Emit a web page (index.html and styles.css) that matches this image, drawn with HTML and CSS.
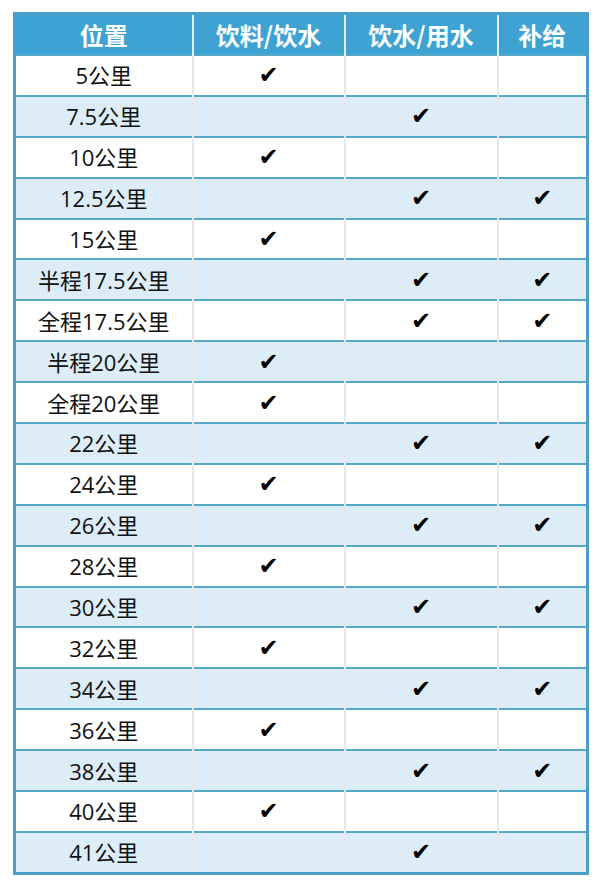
FILE: index.html
```html
<!DOCTYPE html>
<html lang="zh">
<head>
<meta charset="utf-8">
<link rel="stylesheet" href="styles.css">
</head>
<body>
<table class="grid">
  <colgroup>
    <col class="c1"><col class="c2"><col class="c3"><col class="c4">
  </colgroup>
  <thead>
    <tr><th>位置</th><th>饮料/饮水</th><th>饮水/用水</th><th>补给</th></tr>
  </thead>
  <tbody>
    <tr><td>5公里</td><td class="ck">✔</td><td></td><td></td></tr>
    <tr class="alt"><td>7.5公里</td><td></td><td class="ck">✔</td><td></td></tr>
    <tr><td>10公里</td><td class="ck">✔</td><td></td><td></td></tr>
    <tr class="alt"><td>12.5公里</td><td></td><td class="ck">✔</td><td class="ck">✔</td></tr>
    <tr><td>15公里</td><td class="ck">✔</td><td></td><td></td></tr>
    <tr class="alt"><td>半程17.5公里</td><td></td><td class="ck">✔</td><td class="ck">✔</td></tr>
    <tr><td>全程17.5公里</td><td></td><td class="ck">✔</td><td class="ck">✔</td></tr>
    <tr class="alt"><td>半程20公里</td><td class="ck">✔</td><td></td><td></td></tr>
    <tr><td>全程20公里</td><td class="ck">✔</td><td></td><td></td></tr>
    <tr class="alt"><td>22公里</td><td></td><td class="ck">✔</td><td class="ck">✔</td></tr>
    <tr><td>24公里</td><td class="ck">✔</td><td></td><td></td></tr>
    <tr class="alt"><td>26公里</td><td></td><td class="ck">✔</td><td class="ck">✔</td></tr>
    <tr><td>28公里</td><td class="ck">✔</td><td></td><td></td></tr>
    <tr class="alt"><td>30公里</td><td></td><td class="ck">✔</td><td class="ck">✔</td></tr>
    <tr><td>32公里</td><td class="ck">✔</td><td></td><td></td></tr>
    <tr class="alt"><td>34公里</td><td></td><td class="ck">✔</td><td class="ck">✔</td></tr>
    <tr><td>36公里</td><td class="ck">✔</td><td></td><td></td></tr>
    <tr class="alt"><td>38公里</td><td></td><td class="ck">✔</td><td class="ck">✔</td></tr>
    <tr><td>40公里</td><td class="ck">✔</td><td></td><td></td></tr>
    <tr class="alt"><td>41公里</td><td></td><td class="ck">✔</td><td></td></tr>
  </tbody>
</table>
</body>
</html>
```

FILE: styles.css
```css
html, body {
  margin: 0;
  padding: 0;
  background: #ffffff;
}
body {
  padding: 12px 0 0 13px;
  font-family: "Open Sans", "Noto Sans CJK SC", sans-serif;
}
.grid {
  border-collapse: collapse;
  table-layout: fixed;
  width: 573px;
  border: 3px solid #4b9fc6;
}
.c1 { width: 178px; }
.c2 { width: 152px; }
.c3 { width: 153px; }
.c4 { width: 90px; }
.grid th {
  height: 39px;
  padding: 0;
  background: #3ea2d3;
  color: #ffffff;
  font-family: "Noto Sans CJK SC", sans-serif;
  font-weight: 700;
  font-size: 24px;
  line-height: 1;
  text-align: center;
  border-left: 2px solid #e2eef5;
}
.grid td {
  height: 38.9px;
  padding: 0;
  text-align: center;
  font-size: 22px;
  line-height: 1;
  color: #111111;
  border-top: 2px solid #56a8cb;
  border-left: 2px solid #e8e8e8;
  background: #ffffff;
}
.grid tr.alt td {
  background: #ddedf7;
}
.grid th:first-child, .grid td:first-child {
  border-left: none;
}
.grid td.ck {
  font-family: "DejaVu Sans", sans-serif;
  font-size: 24px;
  color: #000000;
}
```
